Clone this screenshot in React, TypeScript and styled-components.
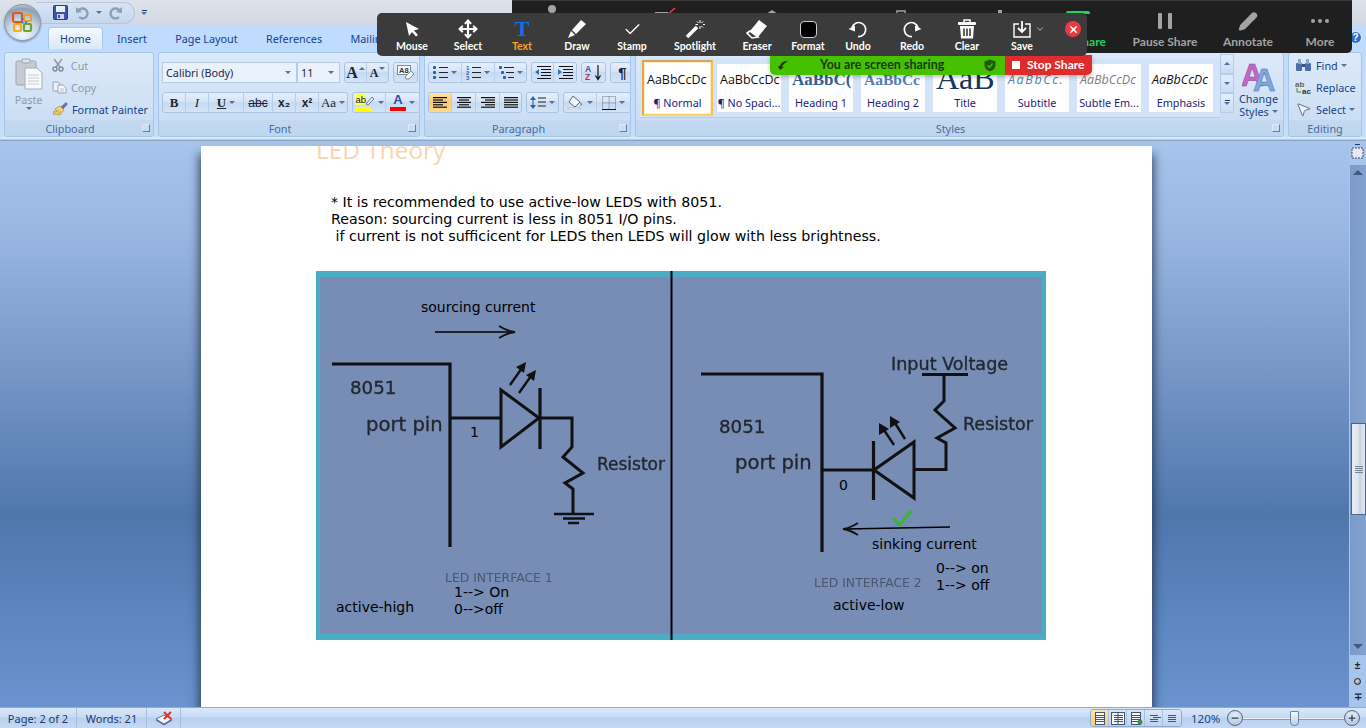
import React from 'react';
import styled, { createGlobalStyle, css } from 'styled-components';
import { Move, Check, Pencil, ChevronDown, X, MousePointer2, Minus, Plus } from 'lucide-react';

const GlobalStyle = createGlobalStyle`
  html, body { margin: 0; padding: 0; width: 1366px; height: 728px; overflow: hidden; }
  * { box-sizing: border-box; }
  body { font-family: "Noto Sans", "Liberation Sans", sans-serif; color: #15428b; }
`;

const Screen = styled.div`
  position: relative;
  width: 1366px;
  height: 728px;
  display: flex;
  flex-direction: column;
  overflow: hidden;
  background: #bfdbff;
`;

/* ---------- title + tabs ---------- */
const TitleBar = styled.div`
  height: 25px;
  display: flex;
  align-items: center;
  padding-left: 36px;
  background: linear-gradient(#dde2ea, #d2d9e4);
`;
const QuickAccess = styled.div`
  width: 99px;
  height: 22px;
  display: flex;
  align-items: center;
  gap: 7px;
  padding-left: 17px;
  border-radius: 0 11px 11px 0;
  border: 1px solid #b4c6de;
  border-left: none;
  background: linear-gradient(#d8e4f4, #c4d6ee);
`;
const QatMore = styled.div`
  margin-left: 6px;
  display: flex;
  flex-direction: column;
  align-items: center;
  gap: 1px;
`;
const QatDash = styled.span`
  width: 5px;
  height: 1px;
  background: #20386a;
`;
const OfficeOrb = styled.div`
  position: absolute;
  left: 4px;
  top: 4px;
  width: 37px;
  height: 37px;
  border-radius: 50%;
  display: flex;
  align-items: center;
  justify-content: center;
  border: 1px solid #8a97a8;
  background: radial-gradient(circle at 50% 85%, #f2f6fb 0%, #c9d4e2 45%, #8e9fb5 75%, #e9eef5 100%);
  box-shadow: 0 1px 2px rgba(40, 60, 90, 0.5);
`;
const TabStrip = styled.div`
  height: 24px;
  display: flex;
  align-items: flex-end;
  padding-left: 48px;
  background: #bfdbff;
`;
const Tab = styled.div<{ $active?: boolean }>`
  height: 22px;
  display: flex;
  align-items: center;
  font-size: 10.8px;
  padding: 0 14.2px;
  ${p => p.$active && css`
    padding: 0 11px;
    border: 1px solid #a9c8e8;
    border-bottom: none;
    border-radius: 4px 4px 0 0;
    background: linear-gradient(#f4f9ff, #dbe8f8);
  `}
`;
const HelpBadge = styled.span`
  position: absolute;
  left: 1349px;
  top: 31px;
  width: 13px;
  height: 13px;
  border-radius: 50%;
  background: #2a6fd0;
  border: 1px solid #e8f1fc;
  color: #fff;
  font: 700 10px/11px "Liberation Sans", sans-serif;
  text-align: center;
`;

/* ---------- ribbon ---------- */
const Ribbon = styled.div`
  height: 92px;
  display: flex;
  gap: 4px;
  padding: 3px 4px 0;
  background: linear-gradient(#bfdbff 0, #c6ddf9 88px, #d4ecfa 88px, #d4ecfa 90px, #8ea6c4 91px);
`;
const Group = styled.section<{ $w: number }>`
  width: ${p => p.$w}px;
  height: 85px;
  display: flex;
  flex-direction: column;
  border: 1px solid #a5c6e6;
  border-radius: 3px;
  overflow: hidden;
  background: linear-gradient(#dce9f9, #d3e3f6 50%, #c7daf2);
`;
const GroupBody = styled.div`
  flex: 1;
  min-height: 0;
  display: flex;
`;
const GroupLabel = styled.div<{ $plain?: boolean }>`
  position: relative;
  height: 16px;
  flex: none;
  text-align: center;
  font-size: 10.8px;
  line-height: 18px;
  padding-right: ${p => (p.$plain ? 0 : 18)}px;
  color: #4a6c9c;
  background: linear-gradient(#c3d9f1, #bdd5ef);
`;
const Launcher = styled.span`
  position: absolute;
  right: 3px;
  top: 4px;
  width: 8px;
  height: 8px;
  border: 1px solid #5e7fa8;
  border-top-color: #dbe8f7;
  border-left-color: #dbe8f7;
  background: #c9dcf2;
`;
const PasteColumn = styled.div`
  width: 47px;
  display: flex;
  flex-direction: column;
  align-items: center;
  padding-top: 5px;
  font-size: 10.8px;
  color: #8f9aa8;
`;
const PasteLabel = styled.span`
  margin-top: 2px;
  line-height: 15px;
`;
const ClipList = styled.div`
  display: flex;
  flex-direction: column;
  padding-top: 1px;
`;
const ClipRow = styled.div<{ $dim?: boolean }>`
  height: 22px;
  display: flex;
  align-items: center;
  gap: 4px;
  font-size: 10.8px;
  color: ${p => (p.$dim ? '#8f9aa8' : '#15428b')};
`;
const ToolColumn = styled.div`
  display: flex;
  flex-direction: column;
  gap: 9px;
  padding: 9px 0 0 3px;
`;
const ToolRow = styled.div`
  display: flex;
  gap: 4px;
  height: 21px;
`;
const Combo = styled.div<{ $w: number }>`
  width: ${p => p.$w}px;
  display: flex;
  align-items: center;
  justify-content: space-between;
  padding: 0 5px 0 3px;
  font-size: 10.8px;
  color: #1b2a4a;
  background: #e9f1fb;
  border: 1px solid #b4cbe6;
`;
const ComboPair = styled.div`
  display: flex;
`;
const ToolSet = styled.div`
  display: flex;
  border: 1px solid #a9c3e0;
  border-radius: 3px;
  overflow: hidden;
  background: linear-gradient(#e6f0fc, #d4e3f6 45%, #c6daf2 50%, #d4e4f7);
`;
const ToolBtn = styled.div<{ $w: number; $on?: boolean }>`
  width: ${p => p.$w}px;
  display: flex;
  align-items: center;
  justify-content: center;
  gap: 3px;
  color: #1d1d1d;
  border-right: 1px solid #b9cfe8;
  &:last-child { border-right: none; }
  ${p => p.$on && css`background: linear-gradient(#fde3a8, #fbc970 50%, #fdd98e);`}
`;
const Glyph = styled.span<{ $serif?: boolean; $b?: boolean; $i?: boolean; $u?: boolean; $s?: boolean; $size?: number }>`
  font-family: ${p => (p.$serif ? '"Liberation Serif", serif' : '"Liberation Sans", sans-serif')};
  font-weight: ${p => (p.$b ? 700 : 400)};
  font-style: ${p => (p.$i ? 'italic' : 'normal')};
  font-size: ${p => p.$size ?? 12}px;
  line-height: 1;
  text-decoration: ${p => (p.$u ? 'underline' : p.$s ? 'line-through' : 'none')};
  color: #20242c;
`;
const Caret = styled.span`
  width: 0;
  height: 0;
  flex: none;
  border-left: 3px solid transparent;
  border-right: 3px solid transparent;
  border-top: 3px solid #53719c;
`;
const UpCaret = styled(Caret)`
  border-top: none;
  border-bottom: 3px solid #53719c;
`;
const GrowCaret = styled(UpCaret)`
  align-self: flex-start;
  margin: 4px 0 0 -2px;
`;
const ShrinkCaret = styled(Caret)`
  align-self: flex-start;
  margin: 4px 0 0 -2px;
`;
const ColorGlyph = styled.span<{ $bar: string }>`
  display: flex;
  flex-direction: column;
  align-items: center;
  font: 700 13px/12px "Liberation Sans", sans-serif;
  color: #2c4f9e;
  width: 16px;
  &::after {
    content: '';
    width: 16px;
    height: 4px;
    margin-top: 1px;
    background: ${p => p.$bar};
  }
`;

/* ---------- styles gallery ---------- */
const StylesBody = styled.div`
  display: flex;
  flex: 1;
  padding-left: 4px;
`;
const Gallery = styled.div`
  width: 580px;
  height: 60px;
  margin-top: 5px;
  display: flex;
  align-items: center;
  gap: 8px;
  padding-left: 2px;
  background: #d3e4f8;
  border-bottom: 1px solid #b4cce8;
`;
const Tile = styled.div<{ $selected?: boolean }>`
  width: 64px;
  height: 48px;
  flex: none;
  display: flex;
  flex-direction: column;
  align-items: center;
  overflow: hidden;
  background: #fff;
  ${p => p.$selected && css`
    width: 71px;
    height: 56px;
    margin-right: -4px;
    padding-top: 2px;
    border: 2px solid;
    border-color: #d8a35a #f5c24c #fdd35a #e9a93f;
    box-shadow: inset 0 0 0 1px #fdf0c8;
  `}
`;
const Sample = styled.div<{ $kind: string }>`
  height: 32px;
  width: 100%;
  flex: none;
  overflow: hidden;
  white-space: nowrap;
  display: flex;
  align-items: center;
  justify-content: flex-start;
  padding: 0 3px;
  font-family: "Open Sans", sans-serif;
  font-size: 12.5px;
  color: #111;
  ${p => p.$kind === 'h1' && css`font: 700 17px "Liberation Serif", serif; color: #365f91;`}
  ${p => p.$kind === 'h2' && css`font: 700 15.5px "Liberation Serif", serif; color: #4f81bd;`}
  ${p => p.$kind === 'title' && css`font: 400 32px/28px "Liberation Serif", serif; color: #17365d; align-items: flex-start;`}
  ${p => p.$kind === 'sub' && css`font-style: italic; color: #4f81bd; letter-spacing: 1.6px;`}
  ${p => p.$kind === 'subtle' && css`font-style: italic; color: #808080;`}
  ${p => p.$kind === 'em' && css`font-style: italic; color: #111;`}
`;
const TileLabel = styled.div`
  font-size: 10.8px;
  line-height: 14px;
  white-space: nowrap;
  color: #1c1c7a;
`;
const GalleryScroll = styled.div`
  width: 14px;
  margin: 1px 0 0 0;
  display: flex;
  flex-direction: column;
`;
const ScrollCell = styled.div`
  height: 19.5px;
  display: flex;
  flex-direction: column;
  align-items: center;
  justify-content: center;
  gap: 1px;
  border: 1px solid #b4cce8;
  background: linear-gradient(#e2edfa, #c9dcf3);
`;
const ChangeStyles = styled.div`
  flex: 1;
  display: flex;
  flex-direction: column;
  align-items: center;
  font-size: 10.8px;
  line-height: 13px;
  text-align: center;
  padding-top: 7px;
`;
const CaretLine = styled.span`
  display: flex;
  align-items: center;
  gap: 3px;
`;
const EditList = styled.div`
  display: flex;
  flex-direction: column;
  padding: 1px 0 0 6px;
`;

/* ---------- workspace ---------- */
const Workspace = styled.main`
  height: 566px;
  display: flex;
  background: linear-gradient(#a6c4ec 0, #9ab8e2 15%, #7a9aca 38%, #5077ac 66%, #5c84bd 82%, #6a93cf 100%);
`;
const Canvas = styled.div`
  width: 1349px;
  padding: 5px 0 0 201px;
  overflow: hidden;
`;
const Page = styled.article`
  width: 951px;
  height: 700px;
  padding-left: 115px;
  overflow: hidden;
  background: #fff;
  box-shadow: 0 10px 9px 2px rgba(30, 40, 60, 0.75);
  position: relative;
`;
const Heading = styled.h1`
  margin: -10px 0 0;
  font: 400 24.4px/28px "Open Sans", sans-serif;
  color: #fbd4b4;
`;
const Notes = styled.div`
  margin: 30px 0 0 15px;
  font: 400 14.2px/17px "DejaVu Sans", sans-serif;
  color: #000;
  white-space: pre;
`;
const Figure = styled.figure`
  margin: 26px 0 0;
  width: 730px;
  height: 369px;
  border: solid #4bacc6;
  border-width: 6px 4px;
  background: #778db6;
`;
const Diagram = styled.svg`
  display: block;
  overflow: visible;
`;
const Scrollbar = styled.aside`
  width: 17px;
  display: flex;
  flex-direction: column;
  align-items: center;
  background: #a6c4ec;
`;
const RulerToggle = styled.div`
  height: 24px;
  padding-top: 3px;
  display: flex;
  flex-direction: column;
  align-items: center;
  gap: 2px;
`;
const Track = styled.div`
  width: 17px;
  height: 490px;
  display: flex;
  flex-direction: column;
  align-items: center;
  justify-content: space-between;
  padding: 5px 0 6px;
  position: relative;
  border-left: 1px solid #a8c5ea;
  background: linear-gradient(90deg, #7b9ac9, #84a2cf);
`;
const Thumb = styled.div`
  position: absolute;
  left: 1px;
  top: 258px;
  width: 15px;
  height: 92px;
  display: flex;
  flex-direction: column;
  align-items: center;
  justify-content: center;
  gap: 1px;
  border: 1px solid #4f6484;
  background: linear-gradient(90deg, #e8edf4, #dfe6ef 45%, #c9d3e0 60%, #e4e9f1);
`;
const Grip = styled.span`
  width: 8px;
  height: 1px;
  background: #77849a;
`;
const TrackArrow = styled.span<{ $down?: boolean }>`
  width: 0;
  height: 0;
  border-left: 5px solid transparent;
  border-right: 5px solid transparent;
  ${p => (p.$down ? 'border-top: 5px solid #46587c;' : 'border-bottom: 5px solid #46587c;')}
`;
const NavPanel = styled.div`
  height: 52px;
  padding: 2px 0;
  display: flex;
  flex-direction: column;
  align-items: center;
  justify-content: space-around;
`;
const Ball = styled.span`
  width: 7px;
  height: 7px;
  border-radius: 50%;
  border: 1px solid #222;
  background: radial-gradient(circle at 40% 35%, #ddd, #777);
`;

/* ---------- status bar ---------- */
const StatusBar = styled.footer`
  height: 21px;
  display: flex;
  align-items: center;
  font-size: 11px;
  color: #20386a;
  border-top: 1px solid #8fabd0;
  background: linear-gradient(#d9e7f9, #c8dbf4 45%, #b7cfee 50%, #c5d9f3);
`;
const StatusCell = styled.div<{ $w: number }>`
  width: ${p => p.$w}px;
  height: 100%;
  display: flex;
  align-items: center;
  justify-content: center;
  border-right: 1px solid #a8c0de;
`;
const StatusRight = styled.div`
  margin-left: auto;
  display: flex;
  align-items: center;
  padding-right: 6px;
`;
const ViewButtons = styled.div`
  display: flex;
  height: 18px;
  border: 1px solid #8da9cc;
  border-radius: 3px;
  overflow: hidden;
`;
const ViewButton = styled.div<{ $on?: boolean }>`
  width: 18px;
  display: flex;
  align-items: center;
  justify-content: center;
  border-right: 1px solid #a9c1df;
  &:last-child { border-right: none; }
  background: ${p => (p.$on ? 'linear-gradient(#fde3a8, #fbc970)' : 'linear-gradient(#dae7f8, #bcd2ef)')};
`;
const Percent = styled.span`
  margin: 0 9px;
  width: 27px;
  font-size: 11.5px;
  color: #1e3f80;
`;
const ZoomRound = styled.span`
  width: 16px;
  height: 16px;
  border-radius: 50%;
  display: flex;
  align-items: center;
  justify-content: center;
  border: 1px solid #55688a;
  background: radial-gradient(circle at 50% 30%, #e9eff8, #a9bcd6);
  color: #2b3a55;
`;
const ZoomTrack = styled.div`
  position: relative;
  width: 101px;
  height: 1px;
  background: #edf3fb;
  box-shadow: 0 1px 0 #7f9ac0;
`;
const ZoomKnob = styled.span`
  position: absolute;
  left: 47px;
  top: -7px;
  width: 9px;
  height: 15px;
  border: 1px solid #6c81a4;
  border-radius: 1px 1px 4px 4px;
  background: linear-gradient(#f4f7fb, #c0cee2);
`;

/* ---------- zoom overlays ---------- */
const ZoomBar = styled.div`
  position: absolute;
  left: 512px;
  top: 0;
  width: 840px;
  height: 53px;
  display: flex;
  justify-content: flex-end;
  align-items: flex-start;
  border-radius: 0 0 5px 5px;
  border-top: 1px solid #3a3a3a;
  background: #1f1f1f;
`;
const ZoomPeek = styled.svg`
  position: absolute;
  left: 0;
  top: 0;
`;
const ZoomItem = styled.div<{ $w: number; $green?: boolean }>`
  width: ${p => p.$w}px;
  height: 52px;
  display: flex;
  flex-direction: column;
  align-items: center;
  justify-content: flex-start;
  padding-top: 10px;
  gap: 2px;
  font: 700 12px/16px "Lato", "Open Sans", sans-serif;
  white-space: nowrap;
  color: ${p => (p.$green ? '#22d35a' : '#a3a3a3')};
  > svg { height: 21px; flex: none; }
`;
const ZoomItemSpacer = styled.span`
  height: 21px;
  flex: none;
`;
const AnnotationDock = styled.div`
  position: absolute;
  left: 377px;
  top: 13px;
  width: 710px;
`;
const AnnotationBar = styled.div`
  height: 43px;
  display: flex;
  align-items: stretch;
  padding-left: 8px;
  border-radius: 5px;
  background: #3a3b3a;
  position: relative;
  z-index: 1;
`;
const AnnotItem = styled.div<{ $w: number; $active?: boolean }>`
  width: ${p => p.$w}px;
  display: flex;
  flex-direction: column;
  align-items: center;
  justify-content: flex-end;
  padding-bottom: 3px;
  font: 700 10.5px/14px "Lato", "Open Sans", sans-serif;
  white-space: nowrap;
  color: ${p => (p.$active ? '#f5a623' : '#fff')};
`;
const AnnotIcon = styled.div`
  height: 20px;
  display: flex;
  align-items: center;
  justify-content: center;
  color: #fff;
`;
const TextIcon = styled.span`
  font: 700 22px/20px "Liberation Serif", serif;
  color: #0e71eb;
`;
const FormatSwatch = styled.span`
  width: 17px;
  height: 17px;
  border-radius: 4px;
  background: #000;
  border: 1px solid #cfcfcf;
`;
const SaveWrap = styled.span`
  display: flex;
  align-items: center;
  gap: 4px;
  margin-left: 14px;
  color: #cfcfcf;
`;
const CloseDot = styled.span`
  align-self: flex-start;
  margin: 8px 0 0 12px;
  width: 16px;
  height: 16px;
  border-radius: 50%;
  display: flex;
  align-items: center;
  justify-content: center;
  color: #fff;
  background: #ee3a3f;
`;
const SharingBar = styled.div`
  width: 322px;
  height: 20px;
  margin: -1px 0 0 393px;
  display: flex;
  box-shadow: 0 2px 4px rgba(0, 0, 0, 0.25);
  border-radius: 0 0 5px 5px;
  overflow: hidden;
`;
const SharingNote = styled.div`
  width: 235px;
  display: flex;
  align-items: center;
  padding: 0 9px 0 7px;
  font: 700 12.5px/20px "Lato", "Open Sans", sans-serif;
  color: #1c3a12;
  background: #45c100;
`;
const SharingText = styled.span`
  flex: 1;
  margin-left: 31px;
`;
const StopShare = styled.div`
  flex: 1;
  display: flex;
  align-items: center;
  gap: 7px;
  padding-left: 7px;
  font: 700 12px/20px "Lato", "Open Sans", sans-serif;
  color: #fff;
  background: #e02b2b;
`;
const StopSquare = styled.span`
  width: 8px;
  height: 8px;
  background: #fff;
`;

/* ---------- small drawings ---------- */
const OfficeLogo = () => (
  <svg width="23" height="23" viewBox="0 0 23 23">
    <rect x="2" y="2" width="9" height="9" rx="1.5" fill="none" stroke="#e8541b" strokeWidth="2.2" />
    <rect x="13" y="4" width="7" height="6" rx="1" fill="none" stroke="#e9a12c" strokeWidth="2" />
    <rect x="3" y="13" width="7" height="7" rx="1" fill="none" stroke="#f3b01b" strokeWidth="2.2" />
    <rect x="13" y="13" width="7" height="7" rx="1" fill="none" stroke="#6aa531" strokeWidth="2.2" />
    <circle cx="11.5" cy="8" r="1.2" fill="#3b7fd0" />
    <circle cx="15" cy="11.5" r="1.2" fill="#3b7fd0" />
    <circle cx="11.5" cy="11.5" r="1.2" fill="#3b7fd0" />
  </svg>
);
const SaveIcon = () => (
  <svg width="15" height="15" viewBox="0 0 15 15">
    <rect x="0.5" y="0.5" width="14" height="14" rx="1" fill="#3d53a8" stroke="#2a3a80" />
    <rect x="3" y="1" width="9" height="6" fill="#e9eef7" />
    <rect x="4" y="9" width="7" height="5" fill="#c9d2e6" />
    <rect x="5" y="10" width="2" height="3" fill="#3d53a8" />
  </svg>
);
const ArcIcon = ({ flip }: { flip?: boolean }) => (
  <svg width="14" height="14" viewBox="0 0 14 14" style={flip ? { transform: 'scaleX(-1)' } : undefined}>
    <path d="M3.5 4.5 A5 5 0 1 1 4 11" fill="none" stroke="#8b9db8" strokeWidth="2.4" />
    <path d="M1 1 L1 7 L7 6 Z" fill="#8b9db8" />
  </svg>
);
const PasteIcon = () => (
  <svg width="28" height="32" viewBox="0 0 28 32">
    <rect x="1" y="3" width="20" height="24" rx="1.5" fill="#c6ccd6" stroke="#9aa4b3" />
    <rect x="7" y="1" width="8" height="4" rx="1" fill="#dde2e9" stroke="#9aa4b3" />
    <path d="M10 10 H22 L27 15 V31 H10 Z" fill="#f7f9fb" stroke="#a3adbb" />
    <path d="M13 17 H24 M13 20 H24 M13 23 H24 M13 26 H24" stroke="#c3cad5" />
  </svg>
);
const ScissorsIcon = () => (
  <svg width="12" height="14" viewBox="0 0 12 14">
    <path d="M2 1 L8 9 M10 1 L4 9" stroke="#8b95a4" strokeWidth="1.4" />
    <circle cx="3" cy="11" r="2" fill="none" stroke="#7d8797" strokeWidth="1.4" />
    <circle cx="9" cy="11" r="2" fill="none" stroke="#7d8797" strokeWidth="1.4" />
  </svg>
);
const CopyIcon = () => (
  <svg width="15" height="13" viewBox="0 0 15 13">
    <path d="M1 1 H6 L8 3 V10 H1 Z" fill="#eef1f5" stroke="#9aa4b3" />
    <path d="M6 4 H11 L14 7 V12 H6 Z" fill="#f5f7fa" stroke="#9aa4b3" />
    <path d="M8 8 H12 M8 10 H12" stroke="#b8c0cc" />
  </svg>
);
const BrushIcon = () => (
  <svg width="16" height="14" viewBox="0 0 16 14">
    <path d="M9 5 L14 0.5 L15.5 2 L11 7 Z" fill="#6c6fb4" stroke="#4b4e8a" strokeWidth="0.5" />
    <path d="M8 4 L12 8 L8 13 L1 12 L2 9 L5 9 L3 7 Z" fill="#f2d277" stroke="#a98b3a" strokeWidth="0.7" />
    <path d="M3 11 L7 8 M6 12 L9 9" stroke="#a98b3a" strokeWidth="0.7" />
  </svg>
);
const ClearFormat = () => (
  <svg width="18" height="16" viewBox="0 0 18 16">
    <rect x="0.5" y="0.5" width="13" height="9" fill="#f8fafc" stroke="#7e8da3" />
    <text x="2" y="8" fontSize="7.5" fontWeight="700" fontFamily="Liberation Sans" fill="#333">A8</text>
    <path d="M8 12 L14 6 L17 9 L12 14 H9 Z" fill="#f3f3f6" stroke="#7d8aa0" />
  </svg>
);
const Bullets = ({ kind }: { kind: 'dot' | 'num' | 'multi' }) => (
  <svg width="15" height="15" viewBox="0 0 15 15">
    {[2, 7, 12].map((y, i) => (
      <g key={y}>
        {kind === 'num' ? (
          <text x="0" y={y + 2.5} fontSize="6" fontWeight="700" fontFamily="Liberation Sans" fill="#2b5fa8">{i + 1}</text>
        ) : (
          <rect x={kind === 'multi' ? i * 2 : 0} y={y - 1} width="3" height="3" rx="1" fill="#2b5fa8" />
        )}
        <rect x={kind === 'multi' ? 5 + i * 2 : 6} y={y} width={kind === 'multi' ? 10 - i * 2 : 9} height="1" fill="#222" />
      </g>
    ))}
  </svg>
);
const AlignIcon = ({ mode }: { mode: 'left' | 'center' | 'right' | 'justify' }) => {
  const widths = [14, 10, 14, 10, 14];
  return (
    <svg width="14" height="11" viewBox="0 0 14 11">
      {widths.map((w, i) => {
        const width = mode === 'justify' ? 14 : w;
        const x = mode === 'left' || mode === 'justify' ? 0 : mode === 'right' ? 14 - width : (14 - width) / 2;
        return <rect key={i} x={x} y={i * 2.4} width={width} height="1.2" fill="#111" />;
      })}
    </svg>
  );
};
const IndentIcon = ({ out }: { out?: boolean }) => (
  <svg width="16" height="13" viewBox="0 0 16 13">
    {[0, 3, 6, 9, 12].map(y => (
      <rect key={y} x={y > 0 && y < 12 ? 6 : 2} y={y} width={y > 0 && y < 12 ? 10 : 14} height="1" fill="#111" />
    ))}
    <path d={out ? 'M0 6 L4 3 V9 Z' : 'M5 6 L1 3 V9 Z'} fill="#3a6fb5" />
  </svg>
);
const SortIcon = () => (
  <svg width="18" height="17" viewBox="0 0 18 17">
    <text x="0" y="8" fontSize="8.5" fontWeight="700" fontFamily="Liberation Sans" fill="#2b5fa8">A</text>
    <text x="0" y="16" fontSize="8.5" fontWeight="700" fontFamily="Liberation Sans" fill="#a83a3a">Z</text>
    <path d="M13 1 V14 M10.5 11.5 L13 15.5 L15.5 11.5" stroke="#111" strokeWidth="1.2" fill="none" />
  </svg>
);
const SpacingIcon = () => (
  <svg width="16" height="15" viewBox="0 0 16 15">
    <path d="M3 1 L6 5 H0 Z M3 14 L6 10 H0 Z" fill="#2b5fa8" />
    <rect x="2.5" y="4" width="1" height="7" fill="#2b5fa8" />
    <path d="M8 3 H16 M8 7 H16 M8 11 H16" stroke="#222" />
  </svg>
);
const BucketIcon = () => (
  <svg width="17" height="15" viewBox="0 0 17 15">
    <path d="M6 1 L13 7 L8 12 L2 7 Z" fill="#f3f6fa" stroke="#596a83" />
    <path d="M13 7 Q16 9 15 11 Q13 10 13 7" fill="#7e8da3" />
    <rect x="1" y="13" width="12" height="2" fill="#f3f6fa" stroke="#8d9aae" strokeWidth="0.5" />
  </svg>
);
const BorderIcon = () => (
  <svg width="14" height="14" viewBox="0 0 14 14">
    <path d="M0.5 0.5 H13.5 V13.5 H0.5 Z M7 0.5 V13.5 M0.5 7 H13.5" fill="none" stroke="#6b778a" strokeDasharray="1 1" />
    <path d="M0 13.5 H14" stroke="#111" />
  </svg>
);
const HighlightIcon = () => (
  <svg width="20" height="18" viewBox="0 0 20 18">
    <rect x="0" y="0" width="11" height="11" fill="#ffff66" />
    <text x="0.5" y="9" fontSize="9.5" fontFamily="Liberation Sans" fill="#111">ab</text>
    <path d="M11 10 L17 3 L19 5 L13 11 Z" fill="#dfe6f2" stroke="#55688a" strokeWidth="0.8" />
    <rect x="0" y="13" width="16" height="4" fill="#ffff00" />
  </svg>
);
const StyleLetters = () => (
  <svg width="34" height="32" viewBox="0 0 34 32">
    <text x="-1" y="26" fontSize="31" fontWeight="700" fontFamily="Liberation Sans" fill="#c06bc2" stroke="#8f3f94" strokeWidth="0.5">A</text>
    <text x="11" y="31" fontSize="31" fontWeight="700" fontFamily="Liberation Sans" fill="#7fa7dd" stroke="#3f6db0" strokeWidth="0.5">A</text>
  </svg>
);
const BinocularIcon = () => (
  <svg width="17" height="14" viewBox="0 0 17 14">
    <rect x="1" y="5" width="6" height="8" rx="1" fill="#4a6fa8" />
    <rect x="10" y="5" width="6" height="8" rx="1" fill="#4a6fa8" />
    <rect x="3" y="1" width="3" height="5" fill="#8ba7cf" />
    <rect x="11" y="1" width="3" height="5" fill="#8ba7cf" />
    <rect x="7" y="6" width="3" height="3" fill="#39537f" />
  </svg>
);
const ReplaceIcon = () => (
  <svg width="17" height="15" viewBox="0 0 17 15">
    <text x="0" y="6.5" fontSize="8" fontWeight="700" fontFamily="Liberation Sans" fill="#666">ab</text>
    <text x="7" y="14" fontSize="8" fontWeight="700" fontFamily="Liberation Sans" fill="#333">ac</text>
    <path d="M2 8 V12 H6" stroke="#2f8f3a" fill="none" />
  </svg>
);
const PointerOutline = () => <MousePointer2 size={17} color="#44587a" fill="#f3f6fa" strokeWidth={1.2} />;
const ProofIcon = () => (
  <svg width="18" height="15" viewBox="0 0 18 15">
    <path d="M1 8 L9 4 L17 8 L9 13 Z" fill="#f1f4f9" stroke="#5e7296" />
    <path d="M1 9 L9 14 L17 9" fill="none" stroke="#3e5c8e" />
    <path d="M9 1 L16 8 M16 1 L9 8" stroke="#e0392c" strokeWidth="2.2" />
  </svg>
);
const PageView = ({ kind }: { kind: number }) => (
  <svg width="14" height="13" viewBox="0 0 14 13">
    <rect x={kind === 1 ? 0.5 : 2.5} y="0.5" width={kind === 1 ? 13 : 9} height="12" fill={kind < 3 ? '#f5f7fa' : 'none'} stroke={kind < 3 ? '#44556f' : 'none'} />
    {kind === 1 && <path d="M7 1 V12" stroke="#44556f" />}
    {[3, 5, 7, 9].map(y => (
      <rect key={y} x={kind === 3 && y === 5 ? 6 : 3} y={y} width={kind === 3 && y === 5 ? 8 : kind === 1 ? 9 : 8} height="1" fill="#44556f" />
    ))}
    {kind === 2 && <circle cx="11" cy="10" r="2.5" fill="#3e8d4b" />}
  </svg>
);
const WireTip = ({ d }: { d: string }) => <path d={d} fill="none" stroke="#111" strokeWidth="1.8" />;

/* ---------- data ---------- */
const tiles = [
  { label: '¶ Normal', kind: 'normal', sample: 'AaBbCcDc', selected: true },
  { label: '¶ No Spaci...', kind: 'normal', sample: 'AaBbCcDc' },
  { label: 'Heading 1', kind: 'h1', sample: 'AaBbC(' },
  { label: 'Heading 2', kind: 'h2', sample: 'AaBbCc' },
  { label: 'Title', kind: 'title', sample: 'AaB' },
  { label: 'Subtitle', kind: 'sub', sample: 'AaBbCc.' },
  { label: 'Subtle Em...', kind: 'subtle', sample: 'AaBbCcDc' },
  { label: 'Emphasis', kind: 'em', sample: 'AaBbCcDc' },
];

const EraserIcon = () => (
  <svg width="22" height="20" viewBox="0 0 22 20">
    <path d="M13 1 L21 7 L12 18 L4 12 Z" fill="#fff" />
    <path d="M4 12 L1 14 L6 19 L12 18 Z" fill="#3a3b3a" stroke="#fff" strokeWidth="1.6" />
  </svg>
);
const DrawIcon = () => (
  <svg width="20" height="20" viewBox="0 0 20 20">
    <path d="M14 1 L19 5 L9 15 L5 11 Z" fill="#fff" />
    <path d="M4 12 L8 16 L1 19 Z" fill="#fff" />
  </svg>
);
const ArrowIcon = () => (
  <svg width="16" height="16" viewBox="0 0 16 16">
    <path d="M2 1 L15 8 L10 9.5 L14 14 L12 15.5 L8 11 L5 15 Z" fill="#fff" />
  </svg>
);
const WandIcon = () => (
  <svg width="20" height="20" viewBox="0 0 20 20">
    <path d="M2 18 L12 8" stroke="#fff" strokeWidth="3.6" />
    <path d="M15 1 V4 M15 7 V10 M18 5.5 H20 M10.5 5.5 H13 M12 2.5 L13.5 4 M18 2.5 L16.5 4 M18 8.5 L16.5 7" stroke="#fff" strokeWidth="1" />
  </svg>
);
const CircleArrow = ({ redo }: { redo?: boolean }) => (
  <svg width="20" height="20" viewBox="0 0 20 20" style={redo ? { transform: 'scaleX(-1)' } : undefined}>
    <path d="M4 8.5 A7 7 0 1 1 10 17.5" fill="none" stroke="#fff" strokeWidth="1.7" />
    <path d="M0.5 10 L7 6.5 L7 12.5 Z" fill="#fff" />
  </svg>
);
const ClearIcon = () => (
  <svg width="18" height="20" viewBox="0 0 18 20">
    <path d="M6 3 V1 H12 V3" fill="none" stroke="#fff" strokeWidth="1.5" />
    <rect x="0" y="3" width="18" height="3" rx="1" fill="#fff" />
    <path d="M2 7 H16 L15 19.5 H3 Z" fill="#fff" />
    <path d="M6 9.5 V17 M9 9.5 V17 M12 9.5 V17" stroke="#3a3b3a" strokeWidth="1.6" />
  </svg>
);
const SaveTrayIcon = () => (
  <svg width="18" height="18" viewBox="0 0 18 18">
    <path d="M6 4 H1 V17 H17 V4 H12" fill="none" stroke="#fff" strokeWidth="1.4" />
    <path d="M9 1 V12 M5 8 L9 12 L13 8" fill="none" stroke="#fff" strokeWidth="1.8" />
  </svg>
);
const ShieldIcon = () => (
  <svg width="12" height="13" viewBox="0 0 12 13">
    <path d="M6 0.5 L11.5 2.5 V6 Q11.5 10.5 6 12.5 Q0.5 10.5 0.5 6 V2.5 Z" fill="#1f5a14" />
    <path d="M3.5 6.5 L5.5 8.5 L8.5 4.5" fill="none" stroke="#45c100" strokeWidth="1.3" />
  </svg>
);

const annotationTools: { label: string; w: number; icon: React.ReactNode; active?: boolean }[] = [
  { label: 'Mouse', w: 54, icon: <ArrowIcon /> },
  { label: 'Select', w: 58, icon: <Move size={20} strokeWidth={2.6} /> },
  { label: 'Text', w: 50, icon: <TextIcon>T</TextIcon>, active: true },
  { label: 'Draw', w: 60, icon: <DrawIcon /> },
  { label: 'Stamp', w: 50, icon: <Check size={19} strokeWidth={1.6} /> },
  { label: 'Spotlight', w: 76, icon: <WandIcon /> },
  { label: 'Eraser', w: 48, icon: <EraserIcon /> },
  { label: 'Format', w: 54, icon: <FormatSwatch /> },
  { label: 'Undo', w: 46, icon: <CircleArrow /> },
  { label: 'Redo', w: 62, icon: <CircleArrow redo /> },
  { label: 'Clear', w: 48, icon: <ClearIcon /> },
  { label: 'Save', w: 62, icon: <SaveWrap><SaveTrayIcon /><ChevronDown size={10} /></SaveWrap> },
];

const LeftCircuit = () => (
  <g>
    <path d="M332 364 H450 V547" fill="none" stroke="#111" strokeWidth="3.2" />
    <path d="M450 418 H501" stroke="#111" strokeWidth="3" />
    <path d="M501 390 V447 L539 418 Z" fill="none" stroke="#111" strokeWidth="3" />
    <path d="M540 388 V449" stroke="#111" strokeWidth="3.2" />
    <path d="M540 418 H572 V447 L563 457 L583 473 L565 483 L573 489 V514" fill="none" stroke="#111" strokeWidth="3" />
    <path d="M554 514 H594 M563 518.5 H585 M568 523 H579" stroke="#111" strokeWidth="2.4" />
    <path d="M510 385 L522 368" stroke="#111" strokeWidth="2.4" />
    <path d="M519 393 L531 376" stroke="#111" strokeWidth="2.4" />
    <path d="M526 362 L516 367 L524 373 Z M536 370 L526 375 L534 381 Z" fill="#111" />
    <path d="M435 332 H514" stroke="#000" strokeWidth="1.6" />
    <WireTip d="M499 326 Q507 331 515 332 Q507 333 499 338" />
  </g>
);
const RightCircuit = () => (
  <g>
    <path d="M701 374 H822 V552" fill="none" stroke="#111" strokeWidth="3.2" />
    <path d="M822 470 H874" stroke="#111" strokeWidth="3" />
    <path d="M873.5 441 V500" stroke="#111" strokeWidth="3.2" />
    <path d="M874 470 L914 442 V498 Z" fill="none" stroke="#111" strokeWidth="3" />
    <path d="M914 469.5 H946 V443 L937 438 L955 428 L935 410 L944 401 V375" fill="none" stroke="#111" strokeWidth="3" />
    <path d="M922 374.5 H968" stroke="#111" strokeWidth="3" />
    <path d="M894 445 L884 430" stroke="#111" strokeWidth="2.4" />
    <path d="M905 439 L895 423" stroke="#111" strokeWidth="2.4" />
    <path d="M879 423 L879 435 L889 429 Z M890 416 L890 428 L900 422 Z" fill="#111" />
    <path d="M950 527 L846 529" stroke="#000" strokeWidth="1.6" />
    <WireTip d="M858 523 Q850 528 843 529 Q850 530 858 535" />
    <path d="M893 518 L899.5 525 L911.5 510.5" fill="none" stroke="#3cb43c" strokeWidth="3.4" />
  </g>
);
const SvgLabel = styled.text<{ $kind: 'hand' | 'type' | 'faint'; $size?: number }>`
  font-family: "DejaVu Sans", sans-serif;
  ${p => p.$kind === 'type' && css`font-size: 14px; fill: #000;`}
  ${p => p.$kind === 'hand' && css`font-size: ${p.$size ?? 17}px; fill: #23272f; stroke: #23272f; stroke-width: 0.35px; filter: blur(0.3px);`}
  ${p => p.$kind === 'faint' && css`font-size: 12.4px; fill: #4a5670; filter: blur(0.4px);`}
`;
const diagramLabels: { x: number; y: number; t: string; k: 'hand' | 'type' | 'faint'; size?: number }[] = [
  { x: 421, y: 312, t: 'sourcing current', k: 'type' },
  { x: 350, y: 394, t: '8051', k: 'hand', size: 18.2 },
  { x: 366, y: 431, t: 'port pin', k: 'hand', size: 19.6 },
  { x: 470, y: 437, t: '1', k: 'type' },
  { x: 597, y: 470, t: 'Resistor', k: 'hand' },
  { x: 445, y: 582, t: 'LED INTERFACE 1', k: 'faint' },
  { x: 454, y: 597, t: '1--> On', k: 'type' },
  { x: 454, y: 614, t: '0-->off', k: 'type' },
  { x: 336, y: 612, t: 'active-high', k: 'type' },
  { x: 891, y: 370, t: 'Input Voltage', k: 'hand', size: 17.6 },
  { x: 963, y: 430, t: 'Resistor', k: 'hand', size: 17.5 },
  { x: 719, y: 433, t: '8051', k: 'hand', size: 18.2 },
  { x: 735, y: 469, t: 'port pin', k: 'hand', size: 19.6 },
  { x: 839, y: 490, t: '0', k: 'type' },
  { x: 872, y: 549, t: 'sinking current', k: 'type' },
  { x: 936, y: 573, t: '0--> on', k: 'type' },
  { x: 936, y: 590, t: '1--> off', k: 'type' },
  { x: 814, y: 587, t: 'LED INTERFACE 2', k: 'faint' },
  { x: 833, y: 610, t: 'active-low', k: 'type' },
];

export default function App() {
  return (
    <Screen>
      <GlobalStyle />
      <TitleBar>
        <QuickAccess>
          <SaveIcon />
          <ArcIcon />
          <Caret />
          <ArcIcon flip />
        </QuickAccess>
        <QatMore>
          <QatDash />
          <Caret />
        </QatMore>
      </TitleBar>
      <OfficeOrb><OfficeLogo /></OfficeOrb>

      <TabStrip>
        <Tab $active>Home</Tab>
        <Tab>Insert</Tab>
        <Tab>Page Layout</Tab>
        <Tab>References</Tab>
        <Tab>Mailings</Tab>
        <Tab>Review</Tab>
        <Tab>View</Tab>
      </TabStrip>
      <HelpBadge>?</HelpBadge>

      <Ribbon>
        <Group $w={150}>
          <GroupBody>
            <PasteColumn>
              <PasteIcon />
              <PasteLabel>Paste</PasteLabel>
              <Caret />
            </PasteColumn>
            <ClipList>
              <ClipRow $dim><ScissorsIcon /><span>&nbsp;Cut</span></ClipRow>
              <ClipRow $dim><CopyIcon /><span>Copy</span></ClipRow>
              <ClipRow><BrushIcon /><span>Format Painter</span></ClipRow>
            </ClipList>
          </GroupBody>
          <GroupLabel>Clipboard<Launcher /></GroupLabel>
        </Group>

        <Group $w={262}>
          <GroupBody>
            <ToolColumn>
              <ToolRow>
                <ComboPair>
                  <Combo $w={135}>Calibri (Body)<Caret /></Combo>
                  <Combo $w={43}>11<Caret /></Combo>
                </ComboPair>
                <ToolSet>
                  <ToolBtn $w={22}><Glyph $serif $b $size={16}>A</Glyph><GrowCaret /></ToolBtn>
                  <ToolBtn $w={21}><Glyph $serif $b $size={12}>A</Glyph><ShrinkCaret /></ToolBtn>
                </ToolSet>
                <ToolSet><ToolBtn $w={23}><ClearFormat /></ToolBtn></ToolSet>
              </ToolRow>
              <ToolRow>
                <ToolSet>
                  <ToolBtn $w={23}><Glyph $serif $b $size={13}>B</Glyph></ToolBtn>
                  <ToolBtn $w={23}><Glyph $serif $i $size={13}>I</Glyph></ToolBtn>
                  <ToolBtn $w={35}><Glyph $serif $b $u $size={13}>U</Glyph><Caret /></ToolBtn>
                  <ToolBtn $w={29}><Glyph $s $size={12}>abc</Glyph></ToolBtn>
                  <ToolBtn $w={23}><Glyph $b $size={12}>x₂</Glyph></ToolBtn>
                  <ToolBtn $w={23}><Glyph $b $size={12}>x²</Glyph></ToolBtn>
                  <ToolBtn $w={28}><Glyph $serif $size={13}>Aa</Glyph><Caret /></ToolBtn>
                </ToolSet>
                <ToolSet>
                  <ToolBtn $w={33}><HighlightIcon /><Caret /></ToolBtn>
                  <ToolBtn $w={33}><ColorGlyph $bar="#ff0000">A</ColorGlyph><Caret /></ToolBtn>
                </ToolSet>
              </ToolRow>
            </ToolColumn>
          </GroupBody>
          <GroupLabel>Font<Launcher /></GroupLabel>
        </Group>

        <Group $w={207}>
          <GroupBody>
            <ToolColumn>
              <ToolRow>
                <ToolSet>
                  <ToolBtn $w={33}><Bullets kind="dot" /><Caret /></ToolBtn>
                  <ToolBtn $w={33}><Bullets kind="num" /><Caret /></ToolBtn>
                  <ToolBtn $w={31}><Bullets kind="multi" /><Caret /></ToolBtn>
                </ToolSet>
                <ToolSet>
                  <ToolBtn $w={22}><IndentIcon out /></ToolBtn>
                  <ToolBtn $w={22}><IndentIcon /></ToolBtn>
                </ToolSet>
                <ToolSet><ToolBtn $w={23}><SortIcon /></ToolBtn></ToolSet>
                <ToolSet><ToolBtn $w={23}><Glyph $b $size={15}>¶</Glyph></ToolBtn></ToolSet>
              </ToolRow>
              <ToolRow>
                <ToolSet>
                  <ToolBtn $w={23} $on><AlignIcon mode="left" /></ToolBtn>
                  <ToolBtn $w={24}><AlignIcon mode="center" /></ToolBtn>
                  <ToolBtn $w={24}><AlignIcon mode="right" /></ToolBtn>
                  <ToolBtn $w={21}><AlignIcon mode="justify" /></ToolBtn>
                </ToolSet>
                <ToolSet><ToolBtn $w={31}><SpacingIcon /><Caret /></ToolBtn></ToolSet>
                <ToolSet>
                  <ToolBtn $w={33}><BucketIcon /><Caret /></ToolBtn>
                  <ToolBtn $w={33}><BorderIcon /><Caret /></ToolBtn>
                </ToolSet>
              </ToolRow>
            </ToolColumn>
          </GroupBody>
          <GroupLabel>Paragraph<Launcher /></GroupLabel>
        </Group>

        <Group $w={649}>
          <StylesBody>
            <Gallery>
              {tiles.map(tile => (
                <Tile key={tile.label} $selected={tile.selected}>
                  <Sample $kind={tile.kind}>{tile.sample}</Sample>
                  <TileLabel>{tile.label}</TileLabel>
                </Tile>
              ))}
            </Gallery>
            <GalleryScroll>
              <ScrollCell><UpCaret /></ScrollCell>
              <ScrollCell><Caret /></ScrollCell>
              <ScrollCell><QatDash /><Caret /></ScrollCell>
            </GalleryScroll>
            <ChangeStyles>
              <StyleLetters />
              <span>Change</span>
              <CaretLine>Styles<Caret /></CaretLine>
            </ChangeStyles>
          </StylesBody>
          <GroupLabel>Styles<Launcher /></GroupLabel>
        </Group>

        <Group $w={74}>
          <GroupBody>
            <EditList>
              <ClipRow><BinocularIcon /><CaretLine>Find<Caret /></CaretLine></ClipRow>
              <ClipRow><ReplaceIcon /><span>Replace</span></ClipRow>
              <ClipRow><PointerOutline /><CaretLine>Select<Caret /></CaretLine></ClipRow>
            </EditList>
          </GroupBody>
          <GroupLabel $plain>Editing</GroupLabel>
        </Group>
      </Ribbon>

      <Workspace>
        <Canvas>
          <Page>
            <Heading>LED Theory</Heading>
            <Notes>
              {'* It is recommended to use active-low LEDS with 8051.\nReason: sourcing current is less in 8051 I/O pins.\n if current is not sufficicent for LEDS then LEDS will glow with less brightness.'}
            </Notes>
            <Figure>
              <Diagram width="722" height="357" viewBox="320 277 722 357">
                <path d="M671.5 271 V640" stroke="#000" strokeWidth="2" />
                <LeftCircuit />
                <RightCircuit />
                {diagramLabels.map(label => (
                  <SvgLabel key={label.t + label.x} x={label.x} y={label.y} $kind={label.k} $size={label.size}>{label.t}</SvgLabel>
                ))}
              </Diagram>
            </Figure>
          </Page>
        </Canvas>
        <Scrollbar>
          <RulerToggle>
            <QatDash />
            <svg width="13" height="12" viewBox="0 0 13 12">
              <path d="M1 1 H12 V11 H1 Z" fill="#e9e7ef" stroke="#3c4a68" strokeDasharray="2 1" />
            </svg>
          </RulerToggle>
          <Track>
            <TrackArrow />
            <Thumb>
              <Grip /><Grip /><Grip /><Grip />
            </Thumb>
            <TrackArrow $down />
          </Track>
          <NavPanel>
            <Glyph $b $size={10}>±</Glyph>
            <Ball />
            <Glyph $b $size={10}>∓</Glyph>
          </NavPanel>
        </Scrollbar>
      </Workspace>

      <StatusBar>
        <StatusCell $w={77}>Page: 2 of 2</StatusCell>
        <StatusCell $w={70}>Words: 21</StatusCell>
        <StatusCell $w={34}><ProofIcon /></StatusCell>
        <StatusRight>
          <ViewButtons>
            <ViewButton $on><PageView kind={0} /></ViewButton>
            <ViewButton><PageView kind={1} /></ViewButton>
            <ViewButton><PageView kind={2} /></ViewButton>
            <ViewButton><PageView kind={3} /></ViewButton>
            <ViewButton><PageView kind={4} /></ViewButton>
          </ViewButtons>
          <Percent>120%</Percent>
          <ZoomRound><Minus size={10} strokeWidth={3} /></ZoomRound>
          <ZoomTrack><ZoomKnob /></ZoomTrack>
          <ZoomRound><Plus size={10} strokeWidth={3} /></ZoomRound>
        </StatusRight>
      </StatusBar>

      <ZoomBar>
        <ZoomPeek width="600" height="13" viewBox="0 0 600 13">
          <circle cx="40" cy="8" r="4" fill="#a3a3a3" />
          <path d="M143 12 H156" stroke="#a3a3a3" strokeWidth="2" />
          <path d="M156 13 L163 7" stroke="#e0433f" strokeWidth="1.6" />
          <path d="M254 13 L260 9 L266 13 Z" fill="#a3a3a3" />
          <path d="M385 13 V10 H393 V13" fill="none" stroke="#a3a3a3" strokeWidth="1.5" />
          <rect x="486" y="9" width="4" height="4" fill="#a3a3a3" />
          <path d="M554 13 V12 Q554 10 556 10 H576 Q578 10 578 12 V13" fill="#22d35a" />
        </ZoomPeek>
        <ZoomItem $w={90} $green>
          <ZoomItemSpacer />
          New Share
        </ZoomItem>
        <ZoomItem $w={86}>
          <svg width="14" height="21" viewBox="0 0 14 21"><rect x="0" y="2" width="4" height="16" rx="1" fill="#a3a3a3" /><rect x="10" y="2" width="4" height="16" rx="1" fill="#a3a3a3" /></svg>
          Pause Share
        </ZoomItem>
        <ZoomItem $w={80}>
          <Pencil size={20} color="#a3a3a3" fill="#a3a3a3" />
          Annotate
        </ZoomItem>
        <ZoomItem $w={64}>
          <svg width="20" height="21" viewBox="0 0 20 21"><circle cx="3" cy="10" r="2" fill="#a3a3a3" /><circle cx="10" cy="10" r="2" fill="#a3a3a3" /><circle cx="17" cy="10" r="2" fill="#a3a3a3" /></svg>
          More
        </ZoomItem>
      </ZoomBar>

      <AnnotationDock>
        <AnnotationBar>
          {annotationTools.map(tool => (
            <AnnotItem key={tool.label} $w={tool.w} $active={tool.active}>
              <AnnotIcon>{tool.icon}</AnnotIcon>
              {tool.label}
            </AnnotItem>
          ))}
          <CloseDot><X size={11} strokeWidth={3.5} /></CloseDot>
        </AnnotationBar>
        <SharingBar>
          <SharingNote>
            <svg width="12" height="11" viewBox="0 0 12 11"><path d="M11 1 Q4 1 3 6 L1 6 L3 10 L7 7 L5 6.5 Q6 4 11 1 Z" fill="#1c3a12" /></svg>
            <SharingText>You are screen sharing</SharingText>
            <ShieldIcon />
          </SharingNote>
          <StopShare>
            <StopSquare />
            Stop Share
          </StopShare>
        </SharingBar>
      </AnnotationDock>
    </Screen>
  );
}
